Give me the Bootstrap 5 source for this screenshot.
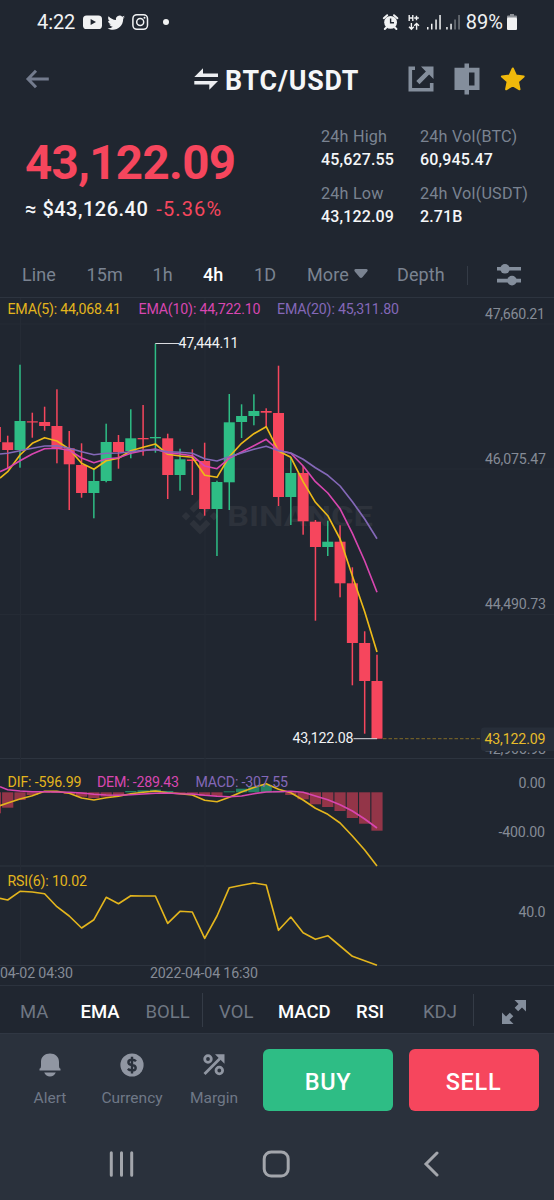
<!DOCTYPE html>
<html lang="en">
<head>
<meta charset="utf-8">
<meta name="viewport" content="width=device-width, initial-scale=1">
<title>BTC/USDT</title>
<link href="https://cdn.jsdelivr.net/npm/bootstrap@5.3.0/dist/css/bootstrap.min.css" rel="stylesheet">
<style>
:root{--ink:#202630;--panel:#2a313c;--muted:#7a8391;--icon:#848e9c;--up:#2ebd85;--down:#f6465d;--gold:#f0b90b}
body{background:var(--panel);color:#f5f6f8;font-family:Roboto,"Liberation Sans",sans-serif;width:554px;height:1200px;overflow:hidden;line-height:1.2}
svg{display:block;flex:none}
.trade{background:var(--ink)}
.status{height:43px;font-size:20px;padding-left:37px;padding-right:37px;color:#f1f2f3}
.topbar{height:71px;padding:0 29.5px 0 25px}
.pair{font-size:26.8px;font-weight:700;padding-top:5px;letter-spacing:.8px;margin-left:7px}
.quote{height:139px}
.last-col{width:321px;padding:21px 0 0 25px}
.last-price{font-size:47.5px;font-weight:700;line-height:56px;color:var(--down);letter-spacing:-.65px}
.fiat{font-size:20px;line-height:36px;font-weight:500;letter-spacing:.5px}
.chg{color:var(--down);font-weight:400;margin-left:8px;letter-spacing:1.1px}
.stats{padding-top:10.5px;display:grid;grid-template-columns:99px 130px;row-gap:11px;align-content:start;line-height:23px;font-size:16.2px}
.stats dt{font-weight:400;color:var(--muted);letter-spacing:.2px}
.stats dd{margin:0;font-size:16px;font-weight:500;letter-spacing:.15px}
.tabs{height:44px;display:grid;align-items:center;font-size:18px;color:var(--muted);padding-left:22px;grid-template-columns:64.5px 66px 50.500px 51px 53px 90px 70px 28.500px 30px;letter-spacing:.1px}
.inds{height:49px;display:grid;align-items:center;font-size:18.5px;color:#6f7783;padding:6px 0 0 20px;border-top:1px solid #2c333e;border-bottom:1px solid #303743;grid-template-columns:60.500px 65px 56.500px 17px 59px 78px 67px 50px 29px 30px}
.on{color:#fff;font-weight:500}
.rule{width:1px;height:19px;background:#343b46}
.dock{height:88px;padding:0 15.500px 0 9px}
.dock-item{width:82px;font-size:15.5px;color:#6f7887;padding-top:18px}
.dock-item span{margin-top:8px;line-height:20px}
.trade-btn{width:130px;height:62px;border-radius:6px;margin-top:15px;font-size:23.5px;font-weight:500;color:#fff;border:0;padding-top:12px;letter-spacing:.7px}
.buy{background:var(--up)}.sell{background:var(--down)}
.sysnav{height:78px}
</style>
</head>
<body>
<main class="trade">
  <div class="status d-flex align-items-center">
    <span style="letter-spacing:-.1px">4:22</span>
    <svg class="ms-2" width="86" height="20" viewBox="83 11 86 20">
      <rect x="83" y="14.4" width="19" height="13.6" rx="3.6" fill="#f1f2f3"/><path d="M90.6 18v6l5.4-3z" fill="#202630"/>
      <path transform="translate(107.600 12.600) scale(.735)" fill="#f1f2f3" d="M23.600 4.900c-.9.4-1.800.7-2.800.8 1-.6 1.800-1.600 2.200-2.700-1 .6-2 1-3.100 1.200A4.900 4.900 0 0 0 11.500 8.700C7.400 8.500 3.800 6.500 1.400 3.600 0 5.900.8 8.700 2.900 10.200c-.8 0-1.600-.2-2.200-.6 0 2.300 1.600 4.400 3.900 4.900-.7.2-1.500.2-2.200.1.600 2 2.400 3.400 4.600 3.400A9.900 9.900 0 0 1 0 20c9.200 5.800 21.200-.9 21.200-12.600v-.6c.9-.6 1.700-1.400 2.400-1.900z"/>
      <g fill="none" stroke="#f1f2f3" stroke-width="1.500"><rect x="132.900" y="13.700" width="14.600" height="14.600" rx="4"/><circle cx="140.200" cy="21" r="3.500"/></g><circle cx="144.500" cy="16.700" r="1" fill="#f1f2f3"/>
      <circle cx="166" cy="21" r="3" fill="#f1f2f3"/>
    </svg>
    <svg class="ms-auto" width="84" height="20" viewBox="382 11 84 20">
      <g stroke="#f1f2f3" fill="none" stroke-width="2" stroke-linecap="round"><path d="M383.800 17.200l3.400-3M397.400 17.200l-3.400-3M386.300 26.500l-1.500 1.500M394.900 26.500l1.500 1.500"/></g>
      <circle cx="390.600" cy="21.400" r="6.400" fill="#f1f2f3"/><path d="M390.600 17.500v4.300h3.400" stroke="#202630" stroke-width="1.400" fill="none"/>
      <g stroke="#f1f2f3" stroke-width="1.400" fill="none"><path d="M409.200 14v6M412.800 14v6M409.200 17h3.600M414.200 17h4.600M416.500 14.700v4.600M411.400 22v6M409 25.800l2.400 2.400 2.400-2.400M416.600 28.800v-6M414.200 24.800l2.400-2.400 2.400 2.400"/></g>
      <g fill="#f1f2f3"><path d="M427 26h1.500v2.500H427zM431 22.800h1.500v5.700H431zM435.300 18.500h1.500v10h-1.500zM439.300 14h1.500v14.500h-1.500zM446.200 26h1.500v2.500h-1.500zM450.300 22.800h1.500v5.700h-1.500z"/><path opacity=".4" d="M454.300 18.500h1.500v10h-1.500zM458.300 14h1.500v14.500h-1.500z"/></g>
    </svg>
    <span>89%</span>
    <svg class="ms-1" width="10" height="16" viewBox="0 0 10 16"><path d="M3 0h4v1.500h2a1 1 0 0 1 1 1V4H0V2.500a1 1 0 0 1 1-1h2z" fill="#8b8f95"/><rect y="3.500" width="10" height="12.500" rx="1" fill="#f1f2f3"/></svg>
  </div>

  <header class="topbar d-flex align-items-center">
    <svg width="26" height="20" viewBox="25 68.500 26 20"><path d="M36 70.200l-8 8.300 8 8.300M28 78.500h20.800" fill="none" stroke="#737b8d" stroke-width="3"/></svg>
    <svg style="margin-left:143px" width="24" height="22" viewBox="194 67.500 24 22"><path d="M194.300 76.500l8.700-8.700v5.200h15v3.500zM218 80.500l-8.700 8.700V84h-15v-3.500z" fill="#eceef1"/></svg>
    <h1 class="pair mb-0">BTC/USDT</h1>
    <svg class="ms-auto" width="117" height="32" viewBox="407.500 62.500 117 32">
      <path d="M408 66h6.500v3.600h-2.900v17.800h17.800V82.500h3.600V91h-25zM420.500 66H433v12.500l-4.400-4.400-9.600 9.600-3.200-3.200 9.600-9.600z" fill="#848e9c"/>
      <path fill-rule="evenodd" d="M464 63h4.500v4.300H479v22.300h-10.500V94H464v-4.400h-10V67.300h10zM468.500 72v13h5.500V72z" fill="#848e9c"/>
      <path d="M512.300 68l3.200 7 7.700.9-5.700 5.200 1.500 7.700-6.700-3.800-6.700 3.800 1.500-7.700-5.700-5.200 7.700-.9z" fill="#f0b90b" stroke="#f0b90b" stroke-width="2" stroke-linejoin="round"/>
    </svg>
  </header>

  <section class="quote d-flex">
    <div class="last-col">
      <div class="last-price">43,122.09</div>
      <div class="fiat">≈ $43,126.40<span class="chg">-5.36%</span></div>
    </div>
    <div class="stats">
      <dl class="mb-0"><dt>24h High</dt><dd>45,627.55</dd></dl>
      <dl class="mb-0"><dt>24h Vol(BTC)</dt><dd>60,945.47</dd></dl>
      <dl class="mb-0"><dt>24h Low</dt><dd>43,122.09</dd></dl>
      <dl class="mb-0"><dt>24h Vol(USDT)</dt><dd>2.71B</dd></dl>
    </div>
  </section>

  <nav class="tabs">
    <span>Line</span><span>15m</span><span>1h</span><span class="on">4h</span><span>1D</span>
    <span class="d-flex align-items-center">More<svg style="margin:-3px 0 0 5px" width="14" height="10" viewBox="0 0 14 10"><path d="M1.500 0h11q2 .8.700 2.400L8.400 8.300q-1.400 1.400-2.800 0L.8 2.400Q-.5.800 1.500 0z" fill="#7a8391"/></svg></span>
    <span>Depth</span><i class="rule"></i>
    <svg width="26" height="24" viewBox="0 0 26 24"><path d="M1 4h24v3.600H1zM1 15.800h24v3.600H1z" fill="#848e9c"/><circle cx="9" cy="5.800" r="4.800" fill="#848e9c"/><circle cx="16" cy="17.600" r="4.800" fill="#848e9c"/></svg>
  </nav>

  <svg id="chart" width="554" height="688" viewBox="0 297 554 688" font-family="Roboto,'Liberation Sans',sans-serif" font-size="14.200"></svg>

  <nav class="inds">
    <span>MA</span><span class="on">EMA</span><span>BOLL</span><i class="rule" style="height:34px;margin-top:-5px"></i><span>VOL</span><span class="on">MACD</span><span class="on">RSI</span><span>KDJ</span><i class="rule" style="height:32px;margin-top:-5px"></i>
    <svg style="margin-top:-2px" width="24" height="24" viewBox="0 0 24 24"><path d="M12.500 0H24v11.500l-4-4-3.800 3.800-3.500-3.500L16.500 4zM11.500 24H0V12.500l4 4 3.800-3.800 3.500 3.500L7.500 20z" fill="#848e9c"/></svg>
  </nav>
</main>

<footer>
  <div class="dock d-flex align-items-start">
    <div class="dock-item d-flex flex-column align-items-center">
      <svg width="24" height="28" viewBox="0 0 24 28"><path d="M1.500 18.500v-1.700Q3 16.500 3 14V10C3 4.500 7 1.500 12 1.500s9 3 9 8.500v4q0 2.500 1.500 2.800v1.700zM6.200 20.600h11.600q-1.800 4-5.800 4t-5.800-4z" fill="#9096a2"/></svg>
      <span>Alert</span>
    </div>
    <div class="dock-item d-flex flex-column align-items-center">
      <svg width="24" height="28" viewBox="0 0 24 28"><circle cx="12" cy="13" r="11.600" fill="#9096a2"/><path d="M16 9.200Q14.800 7.800 12 7.800q-3.600 0-3.600 2.400t3.600 2.800 3.700 2.900q0 2.500-3.700 2.500-2.700 0-4.200-1.500M12 4.800v16.600" fill="none" stroke="#2a313c" stroke-width="2.400"/></svg>
      <span>Currency</span>
    </div>
    <div class="dock-item d-flex flex-column align-items-center">
      <svg width="24" height="28" viewBox="0 0 24 28"><g fill="none" stroke="#9096a2" stroke-width="2.800"><circle cx="6" cy="7" r="3.300"/><circle cx="17.300" cy="18.500" r="3.300"/><path d="M2.500 22L18 6.500"/></g><path d="M13 2.200h9.500v9.500z" fill="#9096a2"/></svg>
      <span>Margin</span>
    </div>
    <button class="btn trade-btn buy" style="margin-left:8px">BUY</button>
    <button class="btn trade-btn sell ms-auto">SELL</button>
  </div>
  <div class="sysnav">
    <svg width="554" height="76" viewBox="0 1122 554 76" fill="none" stroke="#a3a6ac" stroke-width="3" stroke-linecap="round">
      <path d="M111.300 1152.700v22.500M121.500 1152.700v22.500M131.700 1152.700v22.500M437 1153l-11 11 11 11"/>
      <rect x="264.200" y="1152" width="24" height="24" rx="7"/>
    </svg>
  </div>
</footer>

<script>
const UP = '#2ebd85', DOWN = '#f6465d', GOLD = '#e3b51d', PINK = '#d846b0', VIOLET = '#8468b8';
const X = k => 20 + 12.31 * k;
// [direction, body top, body bottom, wick top, wick bottom], first candle is index -2
const candles = [
[0,427,442,427,442],[0,442.3,450,435.7,468],[1,421,450,364.7,467.7],[0,421.3,422.5,412.7,437.7],[0,422,426,406.7,430.7],
[0,426,448.5,389.3,463.3],[0,448.3,464.3,431,510],[0,465,493,443.3,497.7],[1,481,493,469,518.3],[1,442,481,423.7,482.3],
[0,442,452,435,468.7],[1,438.3,451,409.3,458.3],[0,438,439.3,405,455.7],[1,437,438.3,343.7,452.7],[0,438.3,475,433.7,499],
[1,459.3,475,448.7,490.7],[0,459.5,461,449.3,495],[0,461,509,442.7,515.7],[1,482,509,480.7,556],[1,422.3,482.3,394,510],
[1,416,422,404.3,438],[1,411,416,394.3,425.3],[0,411,412.7,408.3,427.3],[0,413,497,365.7,506],[1,473,497,457.3,525],
[0,473,521.3,466,534.7],[0,521.7,547,520,620.7],[1,541.7,547,520.7,556],[0,541.7,583.3,525.3,597.3],[0,583.3,643,567.3,685.3],
[0,643,681,631.3,733.7],[0,681,738.7,654.7,738.7]];
// line series start at index -1, preceded by the value at the left edge
const ema5=[478,471.7,455,443.3,437.7,441,449,463.3,469.3,460.7,458.3,450.7,447.3,444,454.3,456,457.3,475.3,477.3,456.7,443.3,433.7,426.7,451,457.3,481.7,502.3,515.7,539,576,611.7,652];
const ema10=[471.7,468.3,460.7,454,448.7,448.3,450.3,458,462.7,459,457.7,453.3,450.7,449,453,454,455.7,466,468.7,458.3,452,445.7,439.3,450.3,453.3,466,481.7,493,508.8,533.3,561,592.3];
const ema20=[454,453.3,450.7,448.3,446,445.7,448.3,451.7,454.7,453.3,453,451.7,450.3,449.7,451.7,452.3,453.3,458.7,461,456.7,453,449.3,446.3,450.7,453,459.3,467.7,475.3,486,501.7,519,538.7];
const dif=[805.7,803,799,795.7,791.3,791.3,793.3,798,800,797.7,796.3,793.7,792.3,791,792.7,793.7,795,800.3,801.7,797.3,792,787.5,783.7,789.3,792.7,800,808.3,814.3,823,836,850,866];
const dem=[786.7,789.7,791,791.7,791.7,792,792.3,793,794.3,795,795.3,794.7,794,793.3,793,793.7,794,795.3,796.3,796.7,796,793.7,792,791.7,791.3,792.3,796,799.7,804.7,811,819,828];
const rsi=[898.3,900,891.3,892,893.7,906.7,916,928,919.7,897.3,903.7,895.7,896,896,923.3,911.3,912,938.3,916,887.7,885.3,883,885,930.3,917,932.7,939.3,935.7,946,956.3,960.7,965.3];
const hist=[813.3,807.7,800,795,793,793,794,796.7,798,796.7,795,791,790.3,789.7,791,793,793.7,796,796,791.3,788.7,786.7,785,790.7,795,799.3,804.3,807,811,818,823.7,830.7];
const Z = 792.3;
const line = (a,c,w=1.65) => `<polyline fill="none" stroke="${c}" stroke-width="${w}" stroke-linejoin="round" points="${a.map((y,i)=>`${i?X(i-2).toFixed(1):0},${y}`).join(' ')}"/>`;
const text = (s,x,y,c,w,anchor='start') => `<text x="${x}" y="${y}" fill="${c}" textLength="${w}" text-anchor="${anchor}">${s}</text>`;
let g = '';
g += '<path d="M0 297.500H554M0 758.500H554M0 866H554M0 965.500H554" stroke="#2d343f"/>';
g += '<path d="M0 324H554M0 469H554M0 614.500H554M20.500 298V965M205 298V965" stroke="#252b35"/>';
g += `<g fill="#2d323b"><path d="M200 498l10.500 10.500-4.200 4.200-6.300-6.300-6.300 6.300-4.200-4.200zM200 534.500L189.500 524l4.200-4.200 6.300 6.300 6.300-6.300 4.200 4.200zM200 511.500l4.800 4.800-4.800 4.800-4.800-4.800zM186 512l4.300 4.300-4.300 4.300-4.300-4.300zM214 512l4.300 4.300-4.300 4.300-4.300-4.300z"/>
<text x="227" y="525.700" font-size="28" font-weight="700" textLength="146" lengthAdjust="spacingAndGlyphs">BINANCE</text></g>`;
candles.forEach(([u,t,b,h,l],i)=>{const x=X(i-2),c=u?UP:DOWN;
  g+=`<rect x="${x-.75}" y="${h}" width="1.500" height="${l-h}" fill="${c}"/><rect x="${x-5.5}" y="${t}" width="11" height="${b-t}" fill="${c}"/>`;});
g += line(ema5,'#edba18')+line(ema10,PINK)+line(ema20,VIOLET);
hist.forEach((y,i)=>{const x=X(i-2);g+=`<rect x="${x-5.6}" y="${Math.min(y,Z)}" width="11.200" height="${Math.abs(y-Z)}" fill="${y<Z?'#248363':'#933548'}"/>`;});
g += line(dif,GOLD)+line(dem,PINK)+line(rsi,GOLD);
g += text('EMA(5): 44,068.41',7.5,314,GOLD,113.500)+text('EMA(10): 44,722.10',138.500,314,PINK,122)+text('EMA(20): 45,311.80',277,314,VIOLET,122);
g += text('DIF: -596.99',7.5,787,GOLD,74)+text('DEM: -289.43',97,787,PINK,82)+text('MACD: -307.55',195.500,787,VIOLET,92.500);
g += text('RSI(6): 10.02',7.5,886,GOLD,79.500);
g += '<path d="M155.300 343.500H179M353.500 738.700H377" stroke="#d9dbdf"/>'+text('47,444.11',178.500,348,'#f1f2f4',60)+text('43,122.08',292.500,742.500,'#f1f2f4',61);
const dim='#858b96';
g += text('47,660.21',485,319.300,dim,60)+text('46,075.47',485,464,dim,61)+text('44,490.73',485,609.300,dim,61)+text('42,905.98',485,754,dim,61);
g += '<path d="M383 738.700H481" stroke="#806b27" stroke-dasharray="3.500 2"/><rect x="481" y="727.500" width="75" height="23.500" rx="3" fill="#272e39"/>'+text('43,122.09',484.500,744,'#e6bc2a',61);
g += text('0.00',518.500,787.700,dim,27)+text('-400.00',498.500,837,dim,46.500)+text('40.0',518.500,917,dim,27);
g += text('04-02 04:30',0,978,dim,73)+text('2022-04-04 16:30',150,978,dim,108);
document.getElementById('chart').innerHTML = g;
</script>
<script src="https://cdn.jsdelivr.net/npm/bootstrap@5.3.0/dist/js/bootstrap.bundle.min.js"></script>
</body>
</html>
